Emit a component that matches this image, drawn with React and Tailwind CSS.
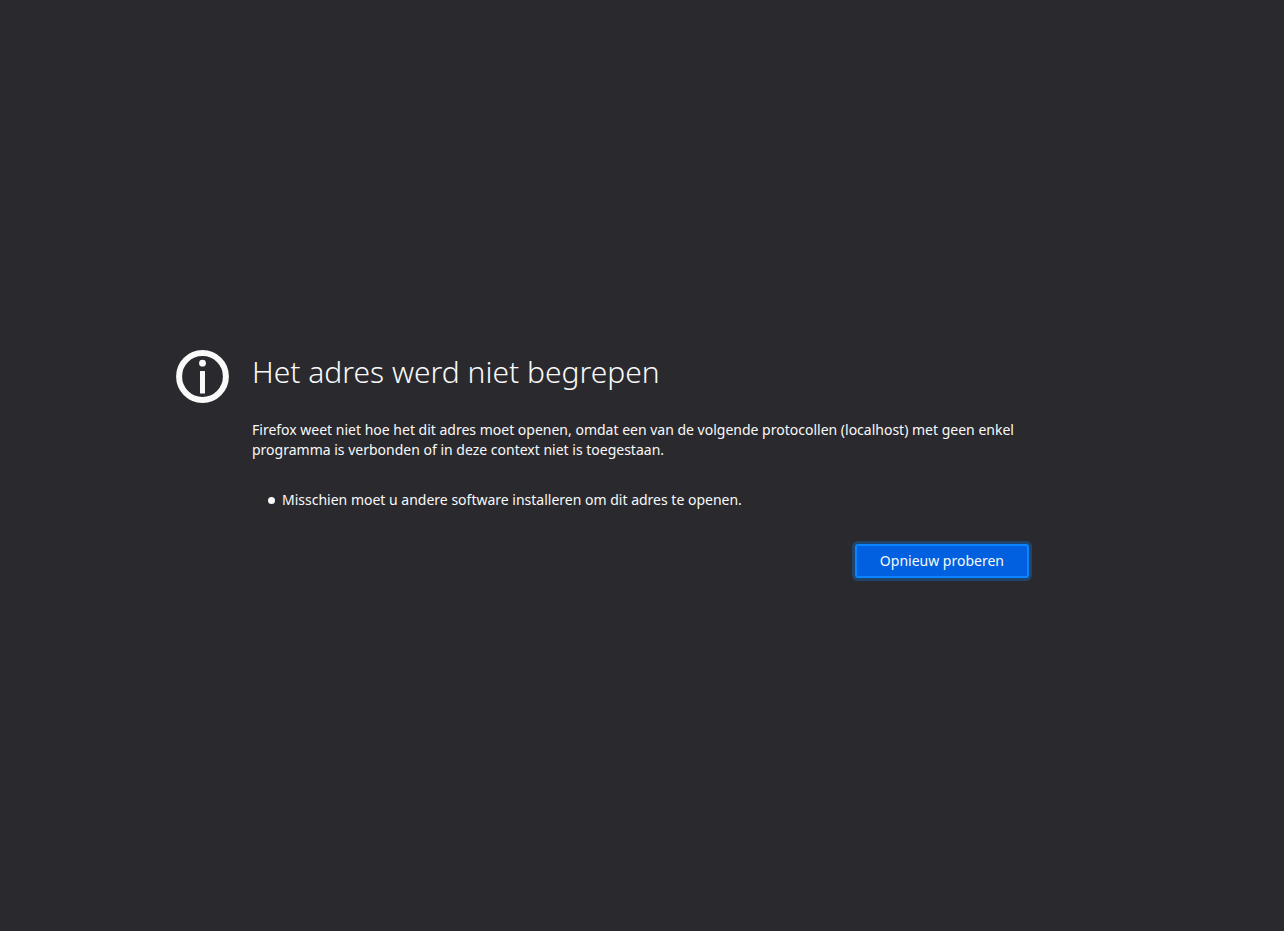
export default function App() {
  return (
    <main className="flex min-h-screen items-center justify-center bg-[#2a2a2e] font-['Noto_Sans','Open_Sans',sans-serif] text-sm leading-5 text-[#f9f9fa]">
      <div className="flex w-full max-w-[932px] items-start gap-[23px] pr-[76px]">
        <svg className="size-[53px] shrink-0" viewBox="0 0 53 53" fill="none" aria-hidden="true">
          <circle cx="26.5" cy="26.5" r="23.4" stroke="#f9f9fa" strokeWidth="6" />
          <circle cx="26.5" cy="13.2" r="3.4" fill="#f9f9fa" />
          <rect x="24" y="21" width="5" height="22.5" rx="0.3" fill="#f9f9fa" />
        </svg>
        <div className="min-w-0 flex-1">
          <h1 className="text-3xl font-light leading-[44px]">Het adres werd niet begrepen</h1>
          <p className="mt-[26px]">
            Firefox weet niet hoe het dit adres moet openen, omdat een van de volgende protocollen (localhost) met geen enkel programma is verbonden of in deze context niet is toegestaan.
          </p>
          <ul className="mt-[30px] pl-4">
            <li className="flex items-center gap-[7px]">
              <span className="size-[7px] shrink-0 rounded-full bg-[#f9f9fa]" aria-hidden="true" />
              Misschien moet u andere software installeren om dit adres te openen.
            </li>
          </ul>
          <div className="mt-[34px] flex justify-end p-[3px] pt-0">
            <button
              type="button"
              className="h-[34px] rounded-[3px] border-2 border-[#0a84ff] bg-[#0060df] px-[23px] ring-3 ring-[#0a84ff]/30"
            >
              Opnieuw proberen
            </button>
          </div>
        </div>
      </div>
    </main>
  );
}
